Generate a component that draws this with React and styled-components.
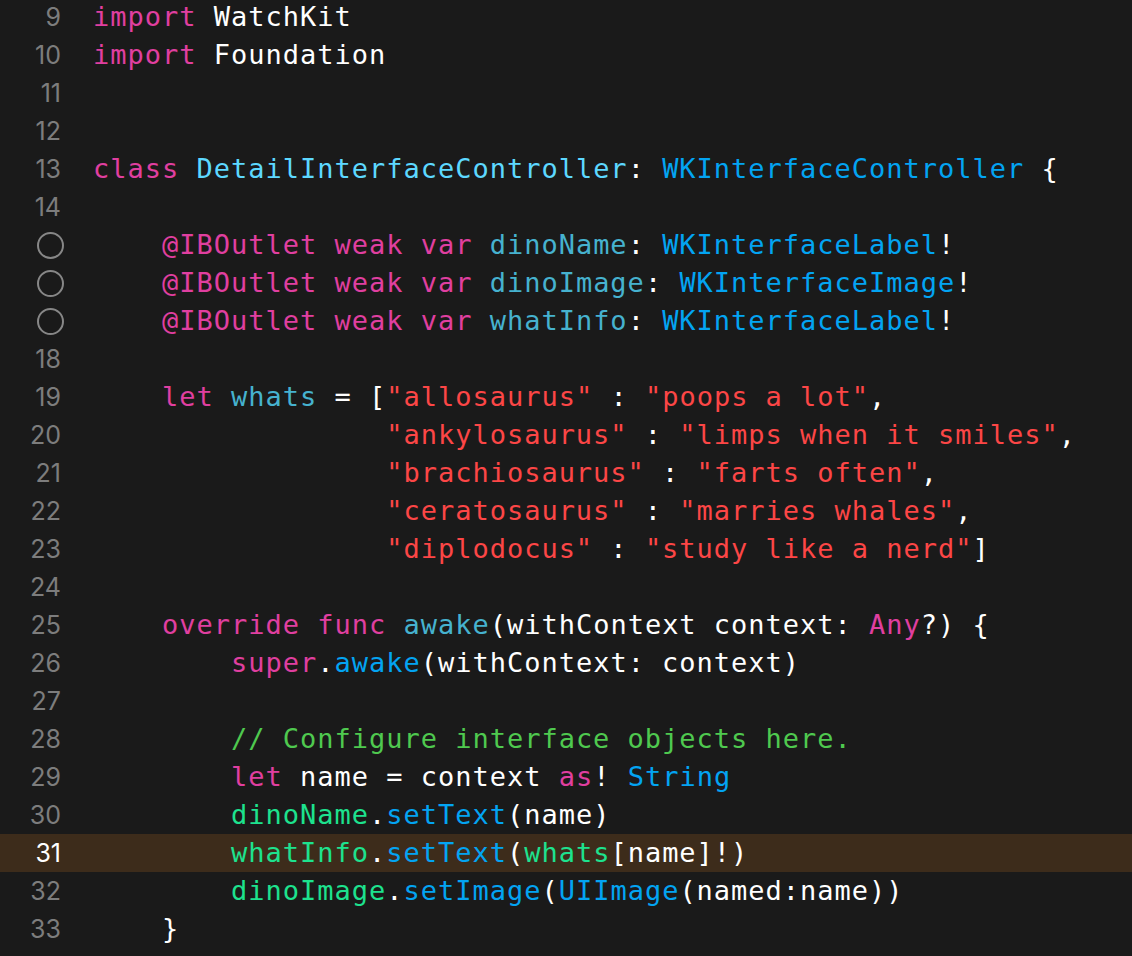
import React from "react";
import styled, { createGlobalStyle } from "styled-components";

const Global = createGlobalStyle`
  html, body { margin: 0; padding: 0; background: #1a1a1a; }
  body { overflow: hidden; }
`;

const Editor = styled.div`
  width: 1132px;
  height: 956px;
  background: #1a1a1a;
  overflow: hidden;
  display: flex;
  flex-direction: column;
`;

const Lines = styled.div`
  margin-top: -2px;
  display: flex;
  flex-direction: column;
`;

const Row = styled.div`
  display: grid;
  grid-template-columns: 93px 1fr;
  height: 38px;
  align-items: center;
  background: ${(p) => (p.$current ? "#3d2c1b" : "transparent")};
`;

const Gutter = styled.div`
  display: flex;
  justify-content: flex-end;
  align-items: center;
  padding-right: 32px;
  font-family: Inter, "Noto Sans", sans-serif;
  font-size: 25px;
  line-height: 38px;
  color: ${(p) => (p.$current ? "#ffffff" : "#7d7d7d")};
`;

const Breakpoint = styled.span`
  width: 23px;
  height: 23px;
  border: 2px solid #878787;
  border-radius: 50%;
  margin-right: -3px;
`;

const Code = styled.div`
  font-family: "DejaVu Sans Mono", "Liberation Mono", monospace;
  font-size: 27px;
  letter-spacing: 0.99px;
  line-height: 38px;
  white-space: pre;
  color: #ffffff;
`;

const colors = {
  kw: "#e03fa0",
  plain: "#ffffff",
  str: "#fc4646",
  decl: "#46b2cf",
  cls: "#5dd8ff",
  type: "#03a4f2",
  ref: "#1de28e",
  comment: "#4fc94f",
};

const Tok = styled.span`
  color: ${(p) => colors[p.$kind] || colors.plain};
`;

const I4 = "    ";
const I8 = "        ";
const I17 = " ".repeat(17);

const lines = [
  { n: 9, t: [["kw", "import"], ["plain", " WatchKit"]] },
  { n: 10, t: [["kw", "import"], ["plain", " Foundation"]] },
  { n: 11, t: [] },
  { n: 12, t: [] },
  {
    n: 13,
    t: [
      ["kw", "class"],
      ["plain", " "],
      ["cls", "DetailInterfaceController"],
      ["plain", ": "],
      ["type", "WKInterfaceController"],
      ["plain", " {"],
    ],
  },
  { n: 14, t: [] },
  {
    n: 15,
    bp: true,
    t: [
      ["plain", I4],
      ["kw", "@IBOutlet weak var"],
      ["plain", " "],
      ["decl", "dinoName"],
      ["plain", ": "],
      ["type", "WKInterfaceLabel"],
      ["plain", "!"],
    ],
  },
  {
    n: 16,
    bp: true,
    t: [
      ["plain", I4],
      ["kw", "@IBOutlet weak var"],
      ["plain", " "],
      ["decl", "dinoImage"],
      ["plain", ": "],
      ["type", "WKInterfaceImage"],
      ["plain", "!"],
    ],
  },
  {
    n: 17,
    bp: true,
    t: [
      ["plain", I4],
      ["kw", "@IBOutlet weak var"],
      ["plain", " "],
      ["decl", "whatInfo"],
      ["plain", ": "],
      ["type", "WKInterfaceLabel"],
      ["plain", "!"],
    ],
  },
  { n: 18, t: [] },
  {
    n: 19,
    t: [
      ["plain", I4],
      ["kw", "let"],
      ["plain", " "],
      ["decl", "whats"],
      ["plain", " = ["],
      ["str", '"allosaurus"'],
      ["plain", " : "],
      ["str", '"poops a lot"'],
      ["plain", ","],
    ],
  },
  {
    n: 20,
    t: [
      ["plain", I17],
      ["str", '"ankylosaurus"'],
      ["plain", " : "],
      ["str", '"limps when it smiles"'],
      ["plain", ","],
    ],
  },
  {
    n: 21,
    t: [
      ["plain", I17],
      ["str", '"brachiosaurus"'],
      ["plain", " : "],
      ["str", '"farts often"'],
      ["plain", ","],
    ],
  },
  {
    n: 22,
    t: [
      ["plain", I17],
      ["str", '"ceratosaurus"'],
      ["plain", " : "],
      ["str", '"marries whales"'],
      ["plain", ","],
    ],
  },
  {
    n: 23,
    t: [
      ["plain", I17],
      ["str", '"diplodocus"'],
      ["plain", " : "],
      ["str", '"study like a nerd"'],
      ["plain", "]"],
    ],
  },
  { n: 24, t: [] },
  {
    n: 25,
    t: [
      ["plain", I4],
      ["kw", "override func"],
      ["plain", " "],
      ["decl", "awake"],
      ["plain", "(withContext context: "],
      ["kw", "Any"],
      ["plain", "?) {"],
    ],
  },
  {
    n: 26,
    t: [
      ["plain", I8],
      ["kw", "super"],
      ["plain", "."],
      ["type", "awake"],
      ["plain", "(withContext: context)"],
    ],
  },
  { n: 27, t: [] },
  {
    n: 28,
    t: [
      ["plain", I8],
      ["comment", "// Configure interface objects here."],
    ],
  },
  {
    n: 29,
    t: [
      ["plain", I8],
      ["kw", "let"],
      ["plain", " name = context "],
      ["kw", "as"],
      ["plain", "! "],
      ["type", "String"],
    ],
  },
  {
    n: 30,
    t: [
      ["plain", I8],
      ["ref", "dinoName"],
      ["plain", "."],
      ["type", "setText"],
      ["plain", "(name)"],
    ],
  },
  {
    n: 31,
    current: true,
    t: [
      ["plain", I8],
      ["ref", "whatInfo"],
      ["plain", "."],
      ["type", "setText"],
      ["plain", "("],
      ["ref", "whats"],
      ["plain", "[name]!)"],
    ],
  },
  {
    n: 32,
    t: [
      ["plain", I8],
      ["ref", "dinoImage"],
      ["plain", "."],
      ["type", "setImage"],
      ["plain", "("],
      ["type", "UIImage"],
      ["plain", "(named:name))"],
    ],
  },
  { n: 33, t: [["plain", I4 + "}"]] },
];

export default function App() {
  return (
    <>
      <Global />
      <Editor>
        <Lines>
          {lines.map((l) => (
            <Row key={l.n} $current={l.current}>
              <Gutter $current={l.current}>
                {l.bp ? <Breakpoint /> : l.n}
              </Gutter>
              <Code>
                {l.t.map(([k, s], i) => (
                  <Tok key={i} $kind={k}>
                    {s}
                  </Tok>
                ))}
                {l.t.length === 0 ? " " : null}
              </Code>
            </Row>
          ))}
        </Lines>
      </Editor>
    </>
  );
}
